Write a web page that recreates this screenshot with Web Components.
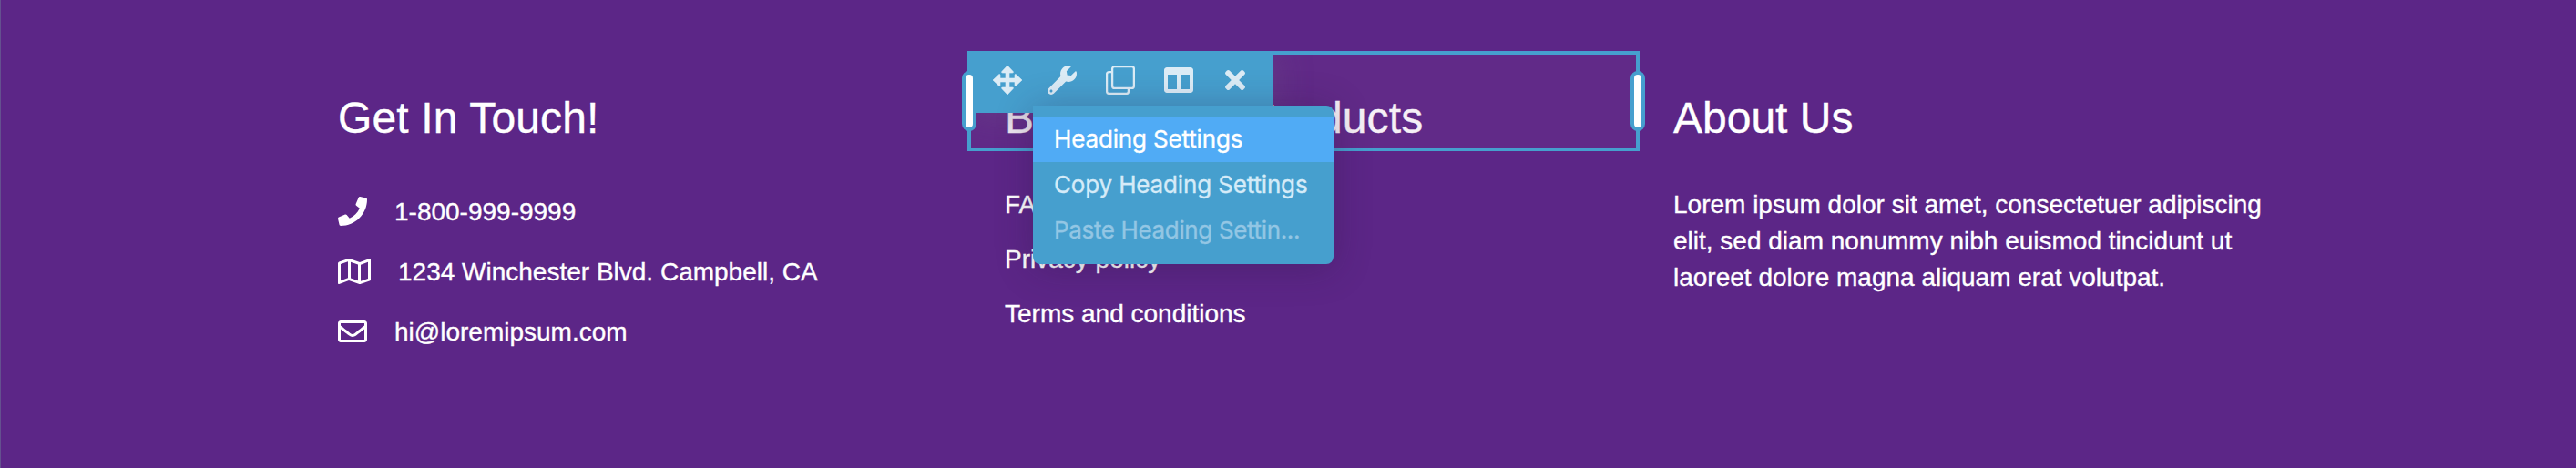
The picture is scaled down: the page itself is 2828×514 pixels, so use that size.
<!DOCTYPE html>
<html lang="en">
<head>
<meta charset="utf-8">
<title>Footer builder</title>
<style>
    html, body {
        margin: 0;
        height: 100%;
    }
    body {
        font-family: "Liberation Sans", Arial, Helvetica, sans-serif;
        background: #5c2687;
        overflow: hidden;
    }
</style>
</head>
<body>
<footer-row>
    <footer-column heading="Get In Touch!" style="--heading-spacing: 0.15px">
        <contact-list>
            <contact-item icon="phone">1-800-999-9999</contact-item>
            <contact-item icon="map">1234 Winchester Blvd. Campbell, CA</contact-item>
            <contact-item icon="mail">hi@loremipsum.com</contact-item>
        </contact-list>
    </footer-column>
    <footer-column heading="Best Selling Products" selected style="--heading-spacing: 0.15px">
        <link-list>
            <span>FAQ</span>
            <span>Privacy policy</span>
            <span>Terms and conditions</span>
        </link-list>
    </footer-column>
    <footer-column heading="About Us">
        <text-block>Lorem ipsum dolor sit amet, consectetuer adipiscing elit, sed diam nonummy nibh euismod tincidunt ut laoreet dolore magna aliquam erat volutpat.</text-block>
    </footer-column>
</footer-row>

<script>
const ICONS = {
    phone: `<svg width="32" height="32" viewBox="0 0 512 512"><path d="M493.4 24.6l-104-24c-11.3-2.6-22.9 3.3-27.5 13.9l-48 112c-4.2 9.8-1.4 21.3 6.9 28l60.6 49.6c-36 76.7-98.9 140.5-177.2 177.2l-49.6-60.6c-6.8-8.3-18.2-11.1-28-6.9l-112 48C3.9 366.5-2 378.1.6 389.4l24 104C27.1 504.2 36.7 512 48 512c256.100 0 464-207.500 464-464 0-11.200-7.700-20.900-18.600-23.400z"/></svg>`,
    map: `<svg width="36" height="32" viewBox="0 0 576 512"><path d="M560.020 32c-1.960 0-3.980.370-5.960 1.160L384.010 96H384L212 35.280A64.252 64.252 0 0 0 191.760 32c-6.690 0-13.370 1.050-19.810 3.140L20.120 87.950A32.006 32.006 0 0 0 0 117.660v346.320C0 473.170 7.530 480 15.990 480c1.960 0 3.970-.370 5.960-1.160L192 416l172 60.710a63.980 63.980 0 0 0 40.050.150l151.830-52.810A31.996 31.996 0 0 0 576 394.340V48.020c0-9.190-7.530-16.020-15.980-16.020zM224 90.420l128 45.190v285.970l-128-45.190V90.420zM48 418.050V129.070l128-44.530v286.200l-.640.230L48 418.050zm480-35.130l-128 44.530V141.260l.640-.240L528 93.950v288.970z"/></svg>`,
    mail: `<svg width="32" height="32" viewBox="0 0 512 512"><path d="M464 64H48C21.490 64 0 85.490 0 112v288c0 26.510 21.490 48 48 48h416c26.510 0 48-21.490 48-48V112c0-26.510-21.490-48-48-48zm0 48v40.805c-22.422 18.259-58.168 46.651-134.587 106.490-16.841 13.247-50.201 45.072-73.413 44.701-23.208.375-56.579-31.459-73.413-44.701C106.180 199.465 70.425 171.067 48 152.805V112h416zM48 400V214.398c22.914 18.251 55.409 43.862 104.938 82.646 21.857 17.205 60.134 55.186 103.062 54.955 42.717.231 80.509-37.199 103.053-54.947 49.528-38.783 82.032-64.401 104.947-82.653V400H48z"/></svg>`,
    move: `<svg width="32" height="32" viewBox="0 0 32 32"><path d="M16 0l6.200 6.600q.8 1.400-.8 1.400H18v6h6v-3.400q0-1.600 1.400-.8L32 16l-6.600 6.200q-1.400.8-1.400-.8V18h-6v6h3.400q1.600 0 .8 1.400L16 32l-6.200-6.600Q9 24 10.600 24H14v-6H8v3.400q0 1.600-1.400.8L0 16l6.600-6.200Q8 9 8 10.600V14h6V8h-3.400Q9 8 9.800 6.600z" style="stroke:currentColor;stroke-width:.6;stroke-linejoin:round"/></svg>`,
    wrench: `<svg class="wrench" width="32" height="32" viewBox="0 0 512 512"><path d="M507.730 109.100c-2.240-9.030-13.540-12.090-20.120-5.510l-74.360 74.360-67.880-11.310-11.310-67.880 74.360-74.360c6.620-6.620 3.430-17.900-5.660-20.160-47.380-11.740-99.550.910-136.580 37.930-39.640 39.640-50.550 97.100-34.050 147.200L18.740 402.760c-24.990 24.990-24.990 65.510 0 90.500 24.990 24.990 65.510 24.990 90.500 0l213.210-213.210c50.120 16.710 107.470 5.680 147.370-34.220 37.070-37.070 49.700-89.320 37.910-136.730zM64 472c-13.250 0-24-10.750-24-24 0-13.260 10.750-24 24-24s24 10.740 24 24c0 13.250-10.750 24-24 24z"/></svg>`,
    copy: `<svg width="32" height="32" viewBox="0 0 32 32" style="fill:none;stroke:currentColor;stroke-width:2.300"><rect x="7.100" y="1.100" width="23.800" height="23.800" rx="2.500"/><path d="M7 7.100H3.600Q1.100 7.100 1.100 9.600v18.800Q1.100 30.900 3.600 30.900h18.800q2.500 0 2.500-2.500V25"/></svg>`,
    columns: `<svg width="32" height="28" viewBox="0 0 512 448"><path d="M464 0H48C21.490 0 0 21.490 0 48v352c0 26.510 21.490 48 48 48h416c26.510 0 48-21.490 48-48V48c0-26.510-21.490-48-48-48zM224 384H64V128h160v256zm224 0H288V128h160v256z"/></svg>`,
    close: `<svg class="close" width="22" height="22" viewBox="0 0 352 352"><path d="M242.720 176l100.070-100.070c12.280-12.280 12.280-32.190 0-44.480l-22.240-22.240c-12.280-12.280-32.190-12.280-44.480 0L176 109.280 75.930 9.210c-12.280-12.280-32.190-12.280-44.480 0L9.210 31.450c-12.280 12.280-12.280 32.190 0 44.480L109.280 176 9.210 276.070c-12.280 12.280-12.280 32.190 0 44.480l22.240 22.240c12.280 12.280 32.200 12.280 44.480 0L176 242.720l100.070 100.070c12.280 12.280 32.200 12.280 44.480 0l22.240-22.240c12.280-12.280 12.280-32.190 0-44.480L242.720 176z"/></svg>`
};

// shared base: puts getTemplate() into an open shadow root
class BuilderElement extends HTMLElement {
    constructor() {
        super();
        this.attachShadow({mode: "open"});
    }
    render() {
        const template = document.createElement("template");
        template.innerHTML = this.getTemplate() + this.getStyles();
        this.shadowRoot.appendChild(template.content.cloneNode(true));
    }
    connectedCallback() {
        this.render();
    }
}

class FooterRow extends BuilderElement {
    getTemplate() {
        return `<slot></slot>`;
    }
    getStyles() {
        return `
        <style>
            :host {
                display: grid;
                grid-template-columns: 732px 734px 735px;
                justify-content: start;
                box-sizing: border-box;
                height: 514px;
                padding: 56px 0 0 329px;
                border-left: 1px solid #64508f;
                color: #fff;
                -webkit-text-stroke: 0.35px currentColor;
            }
        </style>
        `;
    }
}
customElements.define("footer-row", FooterRow);

class FooterColumn extends BuilderElement {
    getTemplate() {
        const tools = this.hasAttribute("selected") ? `<module-overlay></module-overlay>` : "";
        return `
            <div class="module">
                <h2>${this.getAttribute("heading")}</h2>
                ${tools}
            </div>
            <div class="content"><slot></slot></div>
        `;
    }
    getStyles() {
        return `
        <style>
            :host {
                display: block;
            }
            .module {
                position: relative;
                box-sizing: border-box;
                width: 738px;
                height: 110px;
                padding: 45px 41px 0;
            }
            h2 {
                margin: 0;
                font-size: 48px;
                font-weight: 400;
                line-height: 58px;
                letter-spacing: var(--heading-spacing, 0);
                white-space: nowrap;
            }
            .content {
                padding: 39px 41px 0;
            }
        </style>
        `;
    }
}
customElements.define("footer-column", FooterColumn);

class ContactList extends BuilderElement {
    getTemplate() {
        return `<slot></slot>`;
    }
    getStyles() {
        return `
        <style>
            :host {
                display: flex;
                flex-direction: column;
                gap: 26px;
                padding-top: 7px;
            }
        </style>
        `;
    }
}
customElements.define("contact-list", ContactList);

class ContactItem extends BuilderElement {
    getTemplate() {
        return `${ICONS[this.getAttribute("icon")]}<span><slot></slot></span>`;
    }
    getStyles() {
        return `
        <style>
            :host {
                display: flex;
                align-items: center;
                gap: 30px;
                height: 40px;
                font-size: 28px;
                line-height: 40px;
                white-space: nowrap;
            }
            svg {
                fill: currentColor;
                flex: none;
            }
            span {
                padding-top: 2px;
            }
        </style>
        `;
    }
}
customElements.define("contact-item", ContactItem);

class LinkList extends BuilderElement {
    getTemplate() {
        return `<slot></slot>`;
    }
    getStyles() {
        return `
        <style>
            :host {
                display: flex;
                flex-direction: column;
                gap: 20px;
                font-size: 28px;
                line-height: 40px;
            }
        </style>
        `;
    }
}
customElements.define("link-list", LinkList);

class TextBlock extends BuilderElement {
    getTemplate() {
        return `<slot></slot>`;
    }
    getStyles() {
        return `
        <style>
            :host {
                display: block;
                font-size: 28px;
                line-height: 40px;
            }
        </style>
        `;
    }
}
customElements.define("text-block", TextBlock);

// selection frame with its toolbar, drag handles and settings menu
class ModuleOverlay extends BuilderElement {
    getTemplate() {
        return `
            <div class="tint"></div>
            <div class="toolbar">
                ${ICONS.move}
                ${ICONS.wrench}
                ${ICONS.copy}
                ${ICONS.columns}
                ${ICONS.close}
            </div>
            <div class="frame"></div>
            <i class="handle left"></i>
            <i class="handle right"></i>
            <settings-menu>
                <menu-entry active>Heading Settings</menu-entry>
                <menu-entry>Copy Heading Settings</menu-entry>
                <menu-entry disabled>Paste Heading Settin...</menu-entry>
            </settings-menu>
        `;
    }
    getStyles() {
        return `
        <style>
            :host {
                --tool-color: #469fce;
                position: absolute;
                inset: 0;
                z-index: 1;
            }
            .tint {
                position: absolute;
                inset: 4px;
                background: rgba(150, 85, 160, 0.09);
            }
            .frame {
                position: absolute;
                inset: 0;
                border: 4px solid var(--tool-color);
            }
            .toolbar {
                position: absolute;
                left: 0;
                top: 0;
                display: flex;
                align-items: center;
                gap: 32px;
                box-sizing: border-box;
                width: 336px;
                height: 68px;
                padding: 0 0 4px 28px;
                background: var(--tool-color);
                color: #dcecf6;
                box-shadow: 0 0 40px rgba(110, 90, 130, 0.4);
                clip-path: inset(0 -60px -38px 0);
            }
            .toolbar svg {
                fill: currentColor;
                flex: none;
            }
            .toolbar .wrench {
                margin-left: -4px;
            }
            .toolbar .close {
                margin-left: 3px;
            }
            .handle {
                position: absolute;
                top: 22px;
                box-sizing: border-box;
                width: 16px;
                height: 66px;
                border: 4px solid var(--tool-color);
                border-radius: 8px;
                background: #fff;
            }
            .left {
                left: -6px;
            }
            .right {
                right: -6px;
            }
            settings-menu {
                position: absolute;
                left: 72px;
                top: 60px;
            }
        </style>
        `;
    }
}

class SettingsMenu extends BuilderElement {
    getTemplate() {
        return `<slot></slot>`;
    }
    getStyles() {
        return `
        <style>
            :host {
                display: block;
                box-sizing: border-box;
                width: 330px;
                height: 174px;
                padding: 12px 0;
                border-radius: 0 8px 8px 8px;
                background: var(--tool-color);
                box-shadow: 0 4px 40px rgba(40, 20, 60, 0.3);
            }
        </style>
        `;
    }
}

class MenuEntry extends BuilderElement {
    getTemplate() {
        return `<slot></slot>`;
    }
    getStyles() {
        return `
        <style>
            :host {
                display: block;
                height: 50px;
                padding-left: 23px;
                font: 26px/50px Inter, "Liberation Sans", sans-serif;
                letter-spacing: -0.15px;
                color: #d5ebf8;
                white-space: nowrap;
            }
            :host([active]) {
                background: #50abf5;
                color: #fff;
            }
            :host([disabled]) {
                color: #93c6e4;
                letter-spacing: -0.35px;
            }
        </style>
        `;
    }
}
customElements.define("settings-menu", SettingsMenu);
customElements.define("menu-entry", MenuEntry);
customElements.define("module-overlay", ModuleOverlay);
</script>
</body>
</html>
